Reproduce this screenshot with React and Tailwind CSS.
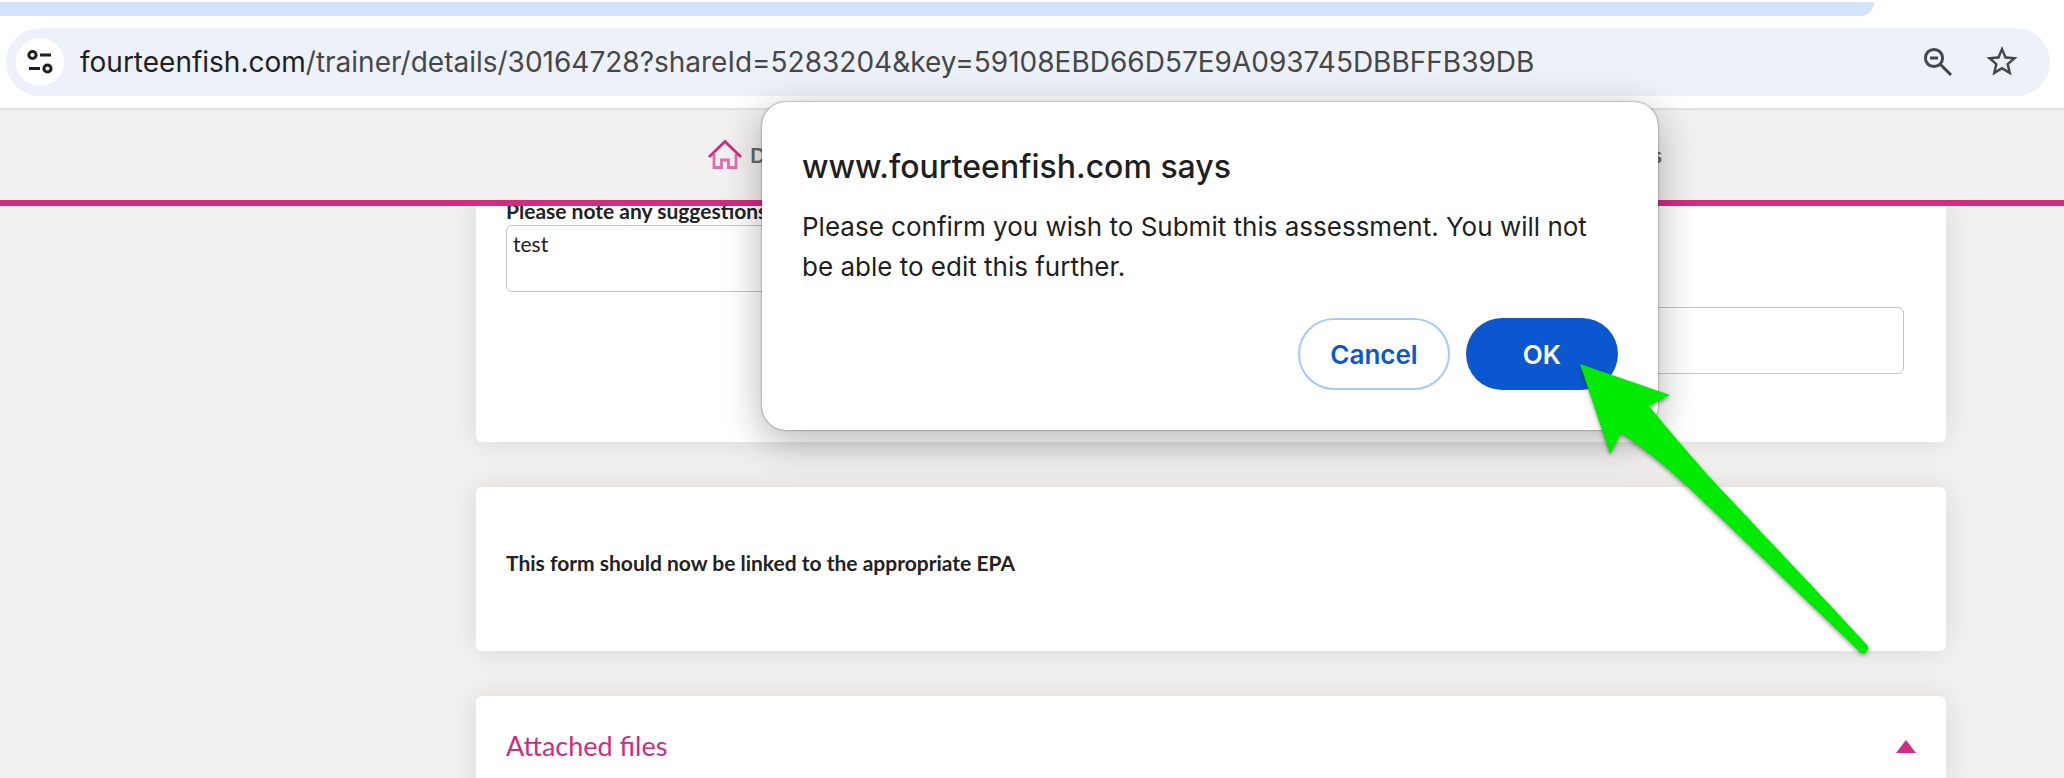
import React, { useState } from "react"

const shareUrl = {
  host: "fourteenfish.com",
  path: "/trainer/details/30164728?shareId=5283204&key=59108EBD66D57E9A093745DBBFFB39DB",
}

function AddressBar() {
  return (
    <div className="bg-white pt-0.5 border-b-2 border-[#e1e1df]">
      <div className="h-3.5 mr-[190px] rounded-br-[24px] bg-[#d3e2fd]" />
      <div className="pt-3 pb-3 pl-1.5 pr-3.5">
        <div className="flex items-center h-[68px] rounded-full bg-[#ecf1fa] pl-2.5 pr-8">
          <button
            aria-label="View site information"
            className="flex items-center justify-center size-12 rounded-full bg-white text-[#1f1f1f]"
          >
            <svg width="26" height="28" viewBox="0 0 26 28" fill="none" stroke="currentColor" strokeWidth="3">
              <circle cx="5.5" cy="7" r="3.6" />
              <path d="M13 7h11M2 20.5h11" />
              <circle cx="20.5" cy="20.5" r="3.6" />
            </svg>
          </button>
          <div className="flex-1 ml-4 text-[28px] leading-9 text-[#474747] whitespace-nowrap">
            <span className="text-[#1f1f1f]">{shareUrl.host}</span>
            {shareUrl.path}
          </div>
          <div className="flex gap-8 text-[#474747]">
            <button aria-label="Zoom">
              <svg width="32" height="32" viewBox="0 0 32 32" fill="none" stroke="currentColor" strokeWidth="3">
                <circle cx="12" cy="12" r="8.6" />
                <path d="M18 18l11 11M8 12h8" />
              </svg>
            </button>
            <button aria-label="Bookmark this tab">
              <svg width="32" height="32" viewBox="1.7 2 20.6 20.6" fill="currentColor">
                <path d="M22 9.24l-7.19-.62L12 2 9.19 8.63 2 9.24l5.46 4.73L5.82 21 12 17.27 18.18 21l-1.63-7.03zM12 15.4l-3.76 2.27 1-4.28-3.32-2.88 4.38-.38L12 6.1l1.71 4.04 4.38.38-3.32 2.88 1 4.28z" />
              </svg>
            </button>
          </div>
        </div>
      </div>
    </div>
  )
}

function Header() {
  return (
    <header className="relative z-10 flex items-center h-24 pl-[708px] pr-[402px] bg-[#f3f1ef] border-b-6 border-[#ce2d80]">
      <nav className="flex flex-1 items-center justify-between font-['Lato',sans-serif] text-[21px] font-bold text-[#666]">
        <a href="#dash" className="flex items-center gap-2">
          <svg width="34" height="32" viewBox="0 0 34 32" fill="none" stroke="#ce2d80" strokeWidth="2.8">
            <path stroke="#e070a9" d="M6 15v13.5h7.5V21h7v7.5H28V15" />
            <path d="M1 18L17 2.5 33 18" />
          </svg>
          Dash
        </a>
        <a href="#resources">Resources</a>
      </nav>
    </header>
  )
}

function Card({ className, children }) {
  return (
    <section className={`bg-white rounded-md shadow-[0_0_30px_rgba(0,0,0,0.1)] ${className}`}>
      {children}
    </section>
  )
}

function Dialog({ onClose }) {
  return (
    <div
      role="dialog"
      aria-labelledby="dialog-title"
      className="absolute z-20 top-[102px] left-[762px] w-[896px] px-10 pt-[45px] pb-10 rounded-3xl bg-white text-[#1f1f1f] shadow-[0_0_2px_rgba(0,0,0,0.6),0_10px_40px_rgba(0,0,0,0.3)]"
    >
      <h1 id="dialog-title" className="text-[32px] leading-10 font-medium">
        www.fourteenfish.com says
      </h1>
      <p className="mt-5 text-[26px] leading-10">
        Please confirm you wish to Submit this assessment. You will not be able to edit this further.
      </p>
      <div className="flex justify-end gap-4 mt-[31px] text-[26px] font-semibold">
        <button
          onClick={onClose}
          className="w-38 h-18 rounded-full border-2 border-[#a8c7fa] text-[#0b57d0]"
        >
          Cancel
        </button>
        <button onClick={onClose} className="w-38 h-18 rounded-full bg-[#0b57d0] text-white">
          OK
        </button>
      </div>
    </div>
  )
}

function Arrow() {
  return (
    <svg
      className="absolute z-30 top-[360px] left-[1576px] pointer-events-none drop-shadow-[0_2px_2px_rgba(0,0,0,0.4)]"
      width="300"
      height="300"
      viewBox="1576 360 300 300"
    >
      <path
        fill="#00ea00"
        d="M1580 364L1670 395L1649 406Q1670 432 1706 473C1740 510 1826 600 1867 645Q1870 649 1866 652Q1862 655 1859 651Q1750 546 1689 488Q1655 456 1621 433L1610 454Z"
      />
    </svg>
  )
}

export default function App() {
  const [open, setOpen] = useState(true)

  return (
    <div className="relative h-screen overflow-hidden bg-[#f3f1ef] font-['Inter',sans-serif]">
      <AddressBar />
      <Header />
      <main className="flex flex-col gap-[45px] ml-[476px] mr-[118px] font-['Lato',sans-serif] text-[#222]">
        <Card className="-mt-2 h-[244px] pl-[30px] pr-[42px]">
          <div className="grid grid-cols-2 gap-8">
            <div>
              <label htmlFor="suggestions" className="block pb-0.5 text-[21px] leading-[25px] font-bold whitespace-nowrap">
                Please note any suggestions
              </label>
              <textarea
                id="suggestions"
                defaultValue="test"
                className="block w-full h-[67px] px-1.5 py-1 rounded-md border border-[#c4c4c4] text-[21px] leading-[27px] resize-none"
              />
            </div>
            <textarea
              aria-label="Further comments"
              className="block w-full h-[67px] mt-[109px] rounded-md border border-[#c4c4c4] resize-none"
            />
          </div>
        </Card>
        <Card className="px-[30px] pt-[58px] pb-[70px]">
          <p className="text-[21px] leading-9 font-bold">
            This form should now be linked to the appropriate EPA
          </p>
        </Card>
        <Card className="px-[30px] py-8">
          <button className="flex items-center justify-between w-full text-[27px] leading-9 text-[#ce2d80]">
            Attached files
            <svg width="20" height="13" viewBox="0 0 20 13" fill="currentColor">
              <path d="M10 0l10 13H0z" />
            </svg>
          </button>
        </Card>
      </main>
      {open && <Dialog onClose={() => setOpen(false)} />}
      <Arrow />
    </div>
  )
}
